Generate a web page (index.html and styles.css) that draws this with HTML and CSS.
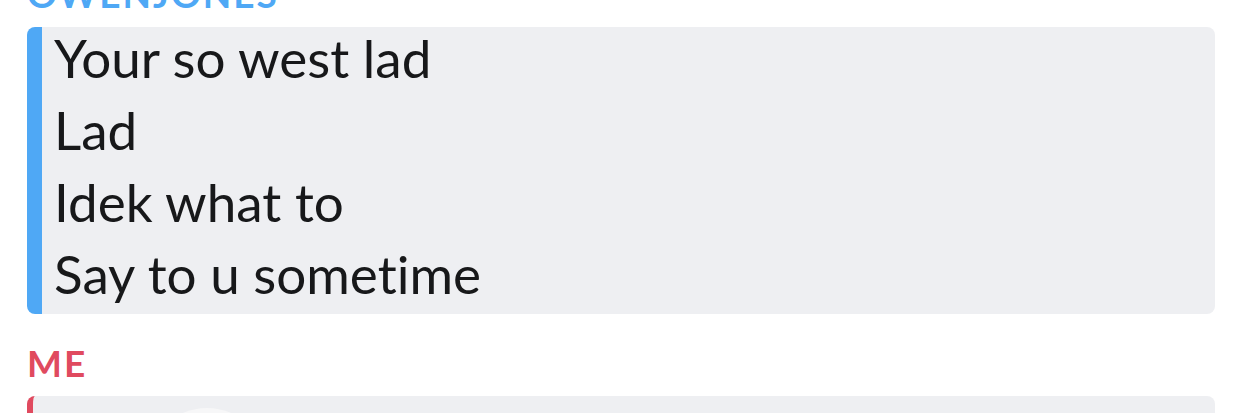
FILE: index.html
```html
<!DOCTYPE html>
<html lang="en">
<head>
    <meta charset="UTF-8">
    <title>Chat</title>
    <link rel="stylesheet" href="styles.css">
</head>
<body>
    <div class="chat">
        <div class="sender sender-them">OWENJONES</div>
        <div class="bubble bubble-them">
            <p>Your so west lad</p>
            <p>Lad</p>
            <p>Idek what to</p>
            <p>Say to u sometime</p>
        </div>

        <div class="sender sender-me">ME</div>
        <div class="bubble bubble-me">
            <div class="media-dot"></div>
        </div>
    </div>
</body>
</html>
```

FILE: styles.css
```css
body {
    margin: 0;
    background: #fff;
    font-family: Lato, "Open Sans", sans-serif;
    color: #17181a;
}
.chat {
    padding: 0 27px;
    height: 413px;
    overflow: hidden;
}
.sender {
    font-size: 37px;
    font-weight: bold;
    letter-spacing: 2px;
    line-height: 1;
}
.sender-them {
    color: #4fa8f5;
    margin-top: -25px;
    margin-bottom: 15px;
}
.sender-me {
    color: #e04a5f;
    margin-top: 30px;
    margin-bottom: 15px;
}
.bubble {
    display: flow-root;
    background: #eeeff2;
    border-radius: 8px;
    border-left: 15px solid #4fa8f5;
    padding: 0 0 0 12px;
    height: 287px;
}
.bubble p {
    margin: 0;
    font-size: 53px;
    line-height: 72px;
    font-variant-ligatures: none;
}
.bubble p:first-child {
    margin-top: -5px;
}
.bubble-me {
    border-left: 6px solid #e04a5f;
    height: 120px;
    position: relative;
}
.media-dot {
    position: absolute;
    left: 114px;
    top: 12px;
    width: 120px;
    height: 120px;
    border-radius: 50%;
    background: #f7f7f8;
}
```
